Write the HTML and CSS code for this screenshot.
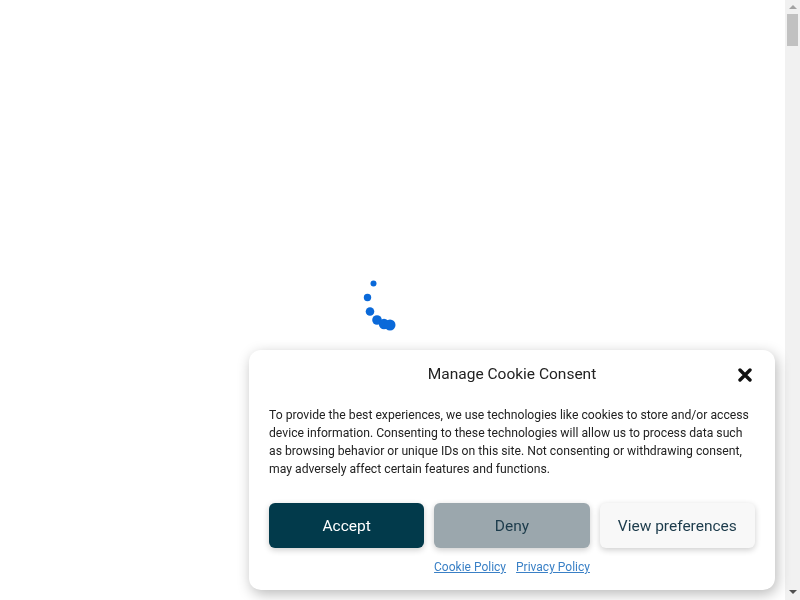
FILE: index.html
```html
<!DOCTYPE html>
<html lang="en">
<head>
  <meta charset="UTF-8" />
  <meta name="viewport" content="width=device-width, initial-scale=1.0"/>
  <title>Loading</title>
  <link rel="stylesheet" href="styles.css">
</head>
<body>
  <div class="page">
    <div class="loader">
      <svg width="70" height="70" viewBox="0 0 70 70">
        <circle cx="15.5" cy="18.5" r="3" fill="#0a69d9"/>
        <circle cx="9.5" cy="32.5" r="3.7" fill="#0a69d9"/>
        <circle cx="12" cy="46.5" r="4.3" fill="#0a69d9"/>
        <circle cx="19" cy="55" r="4.8" fill="#0a69d9"/>
        <circle cx="26" cy="59" r="5.2" fill="#0a69d9"/>
        <circle cx="32" cy="60" r="5.5" fill="#0a69d9"/>
      </svg>
    </div>
  </div>

  <div class="scrollbar">
    <span class="arrow arrow-up"></span>
    <span class="thumb"></span>
    <span class="arrow arrow-down"></span>
  </div>

  <div class="cookie-banner">
    <div class="cookie-header">
      <div class="cookie-title">Manage Cookie Consent</div>
      <button class="cookie-close" aria-label="close">
        <svg width="16" height="16" viewBox="0 0 16 16">
          <path d="M3 3 L13 13 M13 3 L3 13" stroke="#111" stroke-width="3.4" stroke-linecap="round"/>
        </svg>
      </button>
    </div>
    <div class="cookie-message">
      To provide the best experiences, we use technologies like cookies to store and/or access device information. Consenting to these technologies will allow us to process data such as browsing behavior or unique IDs on this site. Not consenting or withdrawing consent, may adversely affect certain features and functions.
    </div>
    <div class="cookie-buttons">
      <button class="btn btn-accept">Accept</button>
      <button class="btn btn-deny">Deny</button>
      <button class="btn btn-prefs">View preferences</button>
    </div>
    <div class="cookie-links">
      <a href="#">Cookie Policy</a>
      <a href="#">Privacy Policy</a>
    </div>
  </div>
</body>
</html>
```

FILE: styles.css
```css
body {
  margin: 0;
  font-family: Roboto, sans-serif;
  background: #fff;
}
.page {
  margin-right: 15px;
}
.loader {
  height: 600px;
  display: flex;
  align-items: center;
  justify-content: center;
}
.loader svg {
  display: block;
}

/* scrollbar drawn to match the screenshot */
.scrollbar {
  position: fixed;
  top: 0;
  right: 0;
  width: 15px;
  height: 100%;
  background: #f1f1f1;
}
.thumb {
  position: absolute;
  top: 14px;
  left: 2px;
  width: 11px;
  height: 32px;
  background: #c1c1c1;
}
.arrow {
  position: absolute;
  left: 4px;
  width: 0;
  height: 0;
  border-left: 4px solid transparent;
  border-right: 4px solid transparent;
}
.arrow-up {
  top: 5px;
  border-bottom: 4px solid #a3a3a3;
}
.arrow-down {
  bottom: 6px;
  border-top: 4px solid #505050;
}

.cookie-banner {
  position: fixed;
  right: 25px;
  bottom: 10px;
  width: 526px;
  box-sizing: border-box;
  padding: 12px 20px 15px 20px;
  background: #fff;
  border-radius: 12px;
  box-shadow: 2px 4px 14px rgba(0,0,0,0.28);
  color: #222;
}
.cookie-header {
  position: relative;
  height: 24px;
  display: flex;
  align-items: center;
  justify-content: center;
}
.cookie-title {
  font-size: 15.5px;
  color: #222;
}
.cookie-close {
  position: absolute;
  right: 0;
  top: 3px;
  border: none;
  background: none;
  padding: 0;
  width: 20px;
  height: 20px;
  display: flex;
  align-items: center;
  justify-content: center;
}
.cookie-message {
  margin-top: 20px;
  font-size: 12.2px;
  line-height: 18px;
  color: #222;
}
.cookie-buttons {
  display: flex;
  gap: 10px;
  margin-top: 25px;
}
.btn {
  flex: 1;
  height: 45px;
  border: none;
  border-radius: 6px;
  font-family: Roboto, sans-serif;
  font-size: 15.5px;
  box-shadow: 0 2px 6px rgba(0,0,0,0.2);
}
.btn-accept {
  background: #023a4b;
  color: #fff;
}
.btn-deny {
  background: #9ba7ad;
  color: #1c3b4b;
}
.btn-prefs {
  background: #f8f8f8;
  color: #1c3b4b;
}
.cookie-links {
  display: flex;
  justify-content: center;
  gap: 10px;
  margin-top: 12px;
  font-size: 12px;
  line-height: 15px;
}
.cookie-links a {
  color: #3a80c6;
}
```
